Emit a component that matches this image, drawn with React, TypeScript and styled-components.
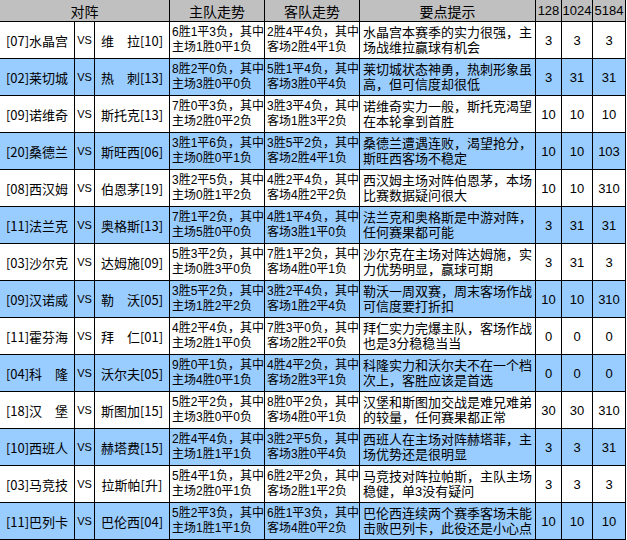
import React from "react";
import styled, {createGlobalStyle} from "styled-components";

const GlobalStyle = createGlobalStyle`
  html, body {
    margin: 0;
    padding: 0;
    background: #ffffff;
  }
`

const Sheet = styled.div`
  display: grid;
  grid-template-columns: 74px 19px 74px 94px 94px 175px 25px 30px 32px;
  grid-template-rows: 21px;
  grid-auto-rows: 36px;
  gap: 1px;
  padding: 0 1px 1px 0;
  width: max-content;
  background: #000000;
  font-family: "Liberation Sans", "Noto Sans CJK SC", sans-serif;
  color: #000000;
`

const Cell = styled.div<{ $blue?: boolean }>`
  display: flex;
  align-items: center;
  justify-content: center;
  overflow: hidden;
  white-space: nowrap;
  background: ${p => (p.$blue ? "#99CCFF" : "#FFFFFF")};
`

const HeadCell = styled(Cell)<{ $span?: number }>`
  grid-column: span ${p => p.$span ?? 1};
  background: #C0C0C0;
  font-family: "Noto Sans CJK SC", sans-serif;
  font-size: 14px;
`

const NumHead = styled(HeadCell)`
  font-family: "Liberation Sans", sans-serif;
  font-size: 13px;
`

const TeamCell = styled(Cell)`
  font-family: "Noto Sans CJK SC", sans-serif;
  font-size: 13px;
`

const VsCell = styled(Cell)`
  font-family: "Liberation Sans", sans-serif;
  font-size: 11px;
`

const TextCell = styled(Cell)<{ $size: number; $pad: number }>`
  flex-direction: column;
  align-items: flex-start;
  padding-left: ${p => p.$pad}px;
  font-size: ${p => p.$size}px;
  line-height: 15px;
`

const Line = styled.span`
  display: block;
  white-space: nowrap;
`

const NumCell = styled(Cell)`
  font-family: "Liberation Sans", sans-serif;
  font-size: 13px;
`

type Match = {
    home: string;
    away: string;
    homeTrend: [string, string];
    awayTrend: [string, string];
    tip: [string, string];
    picks: [string, string, string];
}

const matches: Match[] = [
    {home: "[07]水晶宫", away: "维　拉[10]", homeTrend: ["6胜1平3负，其中", "主场1胜0平1负"], awayTrend: ["2胜4平4负，其中", "客场2胜4平1负"], tip: ["水晶宫本赛季的实力很强，主", "场战维拉赢球有机会"], picks: ["3", "3", "3"]},
    {home: "[02]莱切城", away: "热　刺[13]", homeTrend: ["8胜2平0负，其中", "主场3胜0平0负"], awayTrend: ["5胜1平4负，其中", "客场3胜0平4负"], tip: ["莱切城状态神勇，热刺形象虽", "高，但可信度却很低"], picks: ["3", "31", "31"]},
    {home: "[09]诺维奇", away: "斯托克[13]", homeTrend: ["7胜0平3负，其中", "主场2胜0平2负"], awayTrend: ["3胜3平4负，其中", "客场1胜3平2负"], tip: ["诺维奇实力一般，斯托克渴望", "在本轮拿到首胜"], picks: ["10", "10", "10"]},
    {home: "[20]桑德兰", away: "斯旺西[06]", homeTrend: ["3胜1平6负，其中", "主场0胜0平1负"], awayTrend: ["3胜5平2负，其中", "客场2胜4平1负"], tip: ["桑德兰遭遇连败，渴望抢分，", "斯旺西客场不稳定"], picks: ["10", "10", "103"]},
    {home: "[08]西汉姆", away: "伯恩茅[19]", homeTrend: ["3胜2平5负，其中", "主场0胜1平2负"], awayTrend: ["4胜2平4负，其中", "客场4胜2平2负"], tip: ["西汉姆主场对阵伯恩茅，本场", "比赛数据疑问很大"], picks: ["10", "10", "310"]},
    {home: "[11]法兰克", away: "奥格斯[13]", homeTrend: ["7胜1平2负，其中", "主场5胜0平0负"], awayTrend: ["4胜1平4负，其中", "客场3胜1平0负"], tip: ["法兰克和奥格斯是中游对阵，", "任何赛果都可能"], picks: ["3", "31", "31"]},
    {home: "[03]沙尔克", away: "达姆施[09]", homeTrend: ["5胜3平2负，其中", "主场0胜3平0负"], awayTrend: ["7胜1平2负，其中", "客场4胜0平1负"], tip: ["沙尔克在主场对阵达姆施，实", "力优势明显，赢球可期"], picks: ["3", "31", "3"]},
    {home: "[09]汉诺威", away: "勒　沃[05]", homeTrend: ["3胜5平2负，其中", "主场1胜2平2负"], awayTrend: ["3胜2平4负，其中", "客场1胜2平4负"], tip: ["勒沃一周双赛，周末客场作战", "可信度要打折扣"], picks: ["10", "10", "310"]},
    {home: "[11]霍芬海", away: "拜　仁[01]", homeTrend: ["4胜2平4负，其中", "主场2胜1平0负"], awayTrend: ["7胜3平0负，其中", "客场2胜2平0负"], tip: ["拜仁实力完爆主队，客场作战", "也是3分稳稳当当"], picks: ["0", "0", "0"]},
    {home: "[04]科　隆", away: "沃尔夫[05]", homeTrend: ["9胜0平1负，其中", "主场4胜0平1负"], awayTrend: ["4胜4平2负，其中", "客场2胜3平1负"], tip: ["科隆实力和沃尔夫不在一个档", "次上，客胜应该是首选"], picks: ["0", "0", "0"]},
    {home: "[18]汉　堡", away: "斯图加[15]", homeTrend: ["5胜2平2负，其中", "主场3胜0平0负"], awayTrend: ["8胜0平2负，其中", "客场4胜0平1负"], tip: ["汉堡和斯图加交战是难兄难弟", "的较量，任何赛果都正常"], picks: ["30", "30", "310"]},
    {home: "[10]西班人", away: "赫塔费[15]", homeTrend: ["2胜4平4负，其中", "主场1胜1平1负"], awayTrend: ["3胜2平5负，其中", "客场3胜0平4负"], tip: ["西班人在主场对阵赫塔菲，主", "场优势还是很明显"], picks: ["3", "3", "31"]},
    {home: "[03]马竞技", away: "拉斯帕[升]", homeTrend: ["5胜4平1负，其中", "主场2胜0平1负"], awayTrend: ["6胜2平2负，其中", "客场2胜1平2负"], tip: ["马竞技对阵拉帕斯，主队主场", "稳健，单3没有疑问"], picks: ["3", "3", "3"]},
    {home: "[11]巴列卡", away: "巴伦西[04]", homeTrend: ["5胜2平3负，其中", "主场1胜1平1负"], awayTrend: ["6胜1平3负，其中", "客场4胜0平2负"], tip: ["巴伦西连续两个赛季客场未能", "击败巴列卡，此役还是小心点"], picks: ["10", "10", "10"]},
]

export default function App() {
    return (
        <>
            <GlobalStyle/>
            <Sheet>
                <HeadCell $span={3}>对阵</HeadCell>
                <HeadCell>主队走势</HeadCell>
                <HeadCell>客队走势</HeadCell>
                <HeadCell>要点提示</HeadCell>
                <NumHead>128</NumHead>
                <NumHead>1024</NumHead>
                <NumHead>5184</NumHead>

                {matches.map((m, i) => {
                    const blue = i % 2 === 1;
                    return (
                        <React.Fragment key={m.home}>
                            <TeamCell $blue={blue}>{m.home}</TeamCell>
                            <VsCell $blue={blue}>VS</VsCell>
                            <TeamCell $blue={blue}>{m.away}</TeamCell>
                            <TextCell $blue={blue} $size={12} $pad={2}>
                                <Line>{m.homeTrend[0]}</Line>
                                <Line>{m.homeTrend[1]}</Line>
                            </TextCell>
                            <TextCell $blue={blue} $size={12} $pad={2}>
                                <Line>{m.awayTrend[0]}</Line>
                                <Line>{m.awayTrend[1]}</Line>
                            </TextCell>
                            <TextCell $blue={blue} $size={13} $pad={3}>
                                <Line>{m.tip[0]}</Line>
                                <Line>{m.tip[1]}</Line>
                            </TextCell>
                            {m.picks.map((p, j) => (
                                <NumCell key={j} $blue={blue}>{p}</NumCell>
                            ))}
                        </React.Fragment>
                    )
                })}
            </Sheet>
        </>
    )
}
